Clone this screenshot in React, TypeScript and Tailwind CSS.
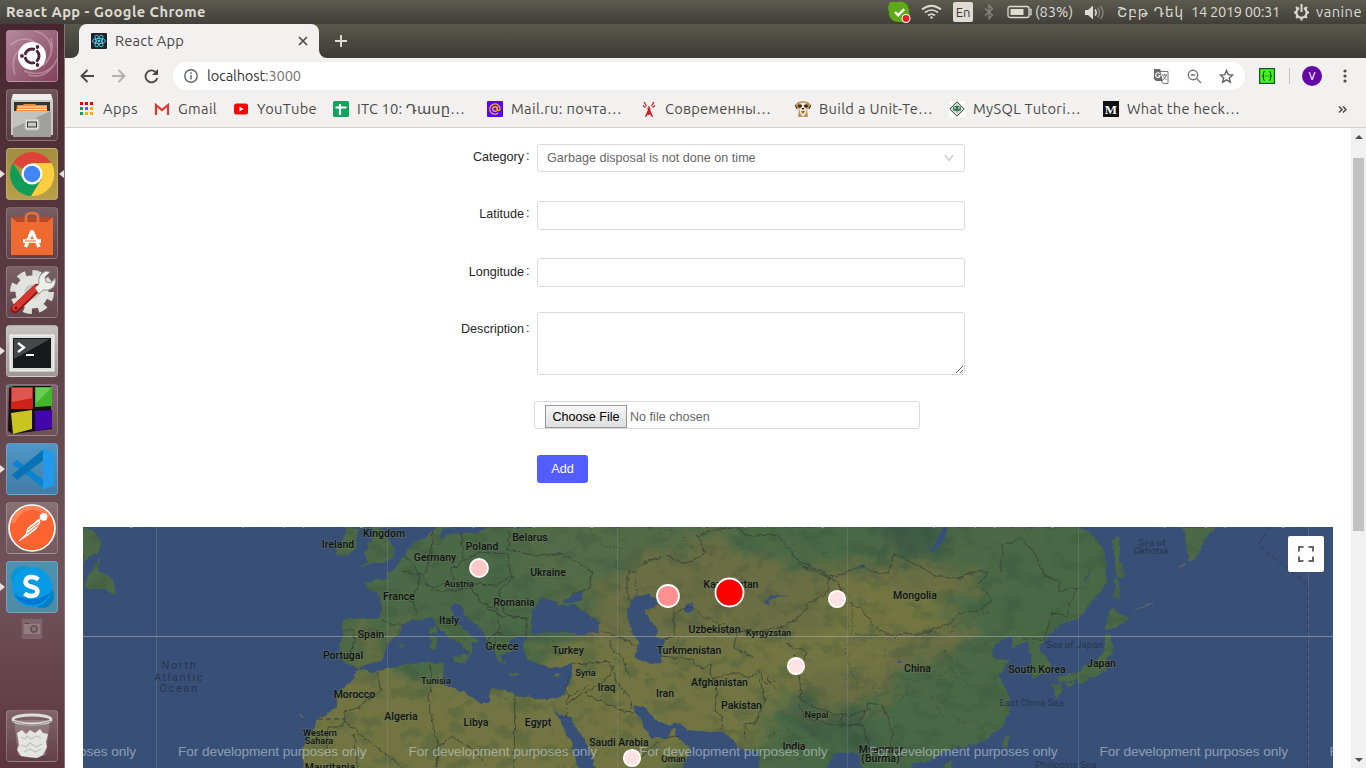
import React, { useLayoutEffect, useRef, useState } from "react";

const UI = "font-['Ubuntu','Noto_Sans','DejaVu_Sans',sans-serif]";

/* Text that is tracked so that it fills a given width. */
function Fit({ w, className = "", children }: { w: number; className?: string; children: string }) {
  const ref = useRef<HTMLSpanElement>(null);
  const [ls, setLs] = useState(0);
  useLayoutEffect(() => {
    const el = ref.current;
    if (el) setLs((w - el.getBoundingClientRect().width) / children.length);
  }, [w, children]);
  return (
    <span ref={ref} className={"inline-block shrink-0 whitespace-pre " + className} style={{ letterSpacing: ls }}>
      {children}
    </span>
  );
}

function TopBar() {
  return (
    <header className={"flex h-6 w-full shrink-0 items-center bg-linear-to-b from-[#5c5b50] to-[#403f3a] text-[14.667px] leading-6 text-[#dfdbd2] " + UI}>
      <Fit w={200} className="ml-1.5 font-bold">React App - Google Chrome</Fit>
      <div className="ml-auto flex h-6 items-center">
        <svg width="24" height="24" viewBox="0 0 24 24" className="mr-[9px]">
          <path d="M3 2h7c6-2 12 4 11 10 2 6-3 11-9 10C5 23 0 17 1 12-.5 8 0 4 3 2z" fill="#5fa818" />
          <path d="M7 12l3.200 3.200 6-6" stroke="#fff" strokeWidth="2.400" fill="none" />
          <circle cx="18" cy="18.500" r="4.500" fill="#fff" />
          <circle cx="18" cy="18.500" r="3.400" fill="#ed1c24" />
        </svg>
        <svg width="21" height="16" viewBox="0 0 21 16" fill="none" stroke="#dfdbd2" strokeWidth="1.700">
          <path d="M1 5.500Q10.500-2 20 5.500M4 8.500q6.500-5 13 0M7 11.500q3.500-2.700 7 0" />
          <circle cx="10.500" cy="13.500" r="1.200" fill="#dfdbd2" stroke="none" />
        </svg>
        <span className="ml-[11px] flex h-5 w-5 items-center justify-center rounded-[2px] bg-[#dfdbd2] text-[13px] text-[#3c3b37]">En</span>
        <svg width="10" height="16" viewBox="0 0 10 16" className="ml-[11px]" fill="none" stroke="#8a887f" strokeWidth="1.200">
          <path d="M1 4.500l7.500 6.500L5 15V1l3.500 4L1 11.500" />
        </svg>
        <svg width="25" height="14" viewBox="0 0 25 14" className="ml-[13px]" fill="none" stroke="#dfdbd2" strokeWidth="1.300">
          <rect x="1" y="1.500" width="21" height="11" rx="2" />
          <rect x="3.500" y="4" width="13" height="6" fill="#dfdbd2" stroke="none" />
          <path d="M22.500 4.500h1.500v5h-1.500" />
        </svg>
        <Fit w={38} className="ml-[3px]">(83%)</Fit>
        <svg width="20" height="15" viewBox="0 0 20 15" className="ml-3" fill="none">
          <path d="M0 5h3l5-4.500v14L3 10H0z" fill="#dfdbd2" />
          <path d="M10 4.500q2.300 3 0 6" stroke="#dfdbd2" strokeWidth="1.600" />
          <path d="M12.500 2.500q4 5 0 10M15.500 1q5 6.500 0 13" stroke="#85837a" strokeWidth="1.500" />
        </svg>
        <Fit w={67} className="ml-3 font-['DejaVu_Sans',sans-serif] text-[13.500px]">Շբթ Դեկ</Fit>
        <Fit w={89} className="ml-[7px]">14 2019 00:31</Fit>
        <svg width="17" height="17" viewBox="0 0 17 17" className="ml-[13px]" fill="none" stroke="#dfdbd2">
          <path d="M6 4a5.200 5.200 0 1 0 5 0" strokeWidth="2.200" />
          <path d="M8.500 0v8M1 8.500h2.500M13.500 8.500H16M3 3l2 2M14 3l-2 2M3 14l2-2M14 14l-2-2M8.500 13v3.500" strokeWidth="2" />
        </svg>
        <Fit w={46} className="mr-1 ml-1.5">vanine</Fit>
      </div>
    </header>
  );
}

function Launcher() {
  const tile = "relative flex size-[52px] shrink-0 items-center justify-center rounded-[4px] border border-white/20 ";
  const dark = "bg-linear-to-b from-white/20 to-white/5";
  const arrow = <span className="absolute top-[21px] -left-[7px] border-y-[4px] border-l-[5px] border-y-transparent border-l-[#e6e1dc]" />;
  return (
    <aside className="flex w-[65px] shrink-0 flex-col items-center gap-[7px] border-r border-[#85757b] bg-linear-to-b from-[#472630] via-[#71545b] via-75% to-[#5b3440] pt-1.5 pr-px pb-1.5">
      <div className={tile + "bg-linear-to-br from-[#b18a9b] to-[#84405c]"}>
        <svg width="50" height="50" viewBox="0 0 50 50" fill="none">
          <path d="M3 14Q16 4 28 11M44 7q4 17-8 28M47 34q-12 13-30 6M8 44Q2 24 16 17M28 0q18 5 16 24M50 28q-9 21-29 16" stroke="#d2b2bf" strokeWidth="1.500" opacity=".55" />
          <circle cx="25" cy="25" r="14" fill="#fff" />
          <circle cx="25" cy="25" r="7" stroke="#512338" strokeWidth="3" />
          <path d="M25 25l-10 0M25 25l6-10M25 25l6 10" stroke="#fff" strokeWidth="1.500" />
          <circle cx="25" cy="25" r="5.300" fill="#fff" />
          <circle cx="15" cy="25" r="2.400" fill="#512338" stroke="#fff" />
          <circle cx="30.500" cy="16" r="2.400" fill="#512338" stroke="#fff" />
          <circle cx="30.500" cy="34" r="2.400" fill="#512338" stroke="#fff" />
        </svg>
      </div>
      <div className={tile + dark}>
        <svg width="46" height="46" viewBox="0 0 46 46">
          <path d="M4 2h38l2 6v35H2V8z" fill="#c9c9c7" />
          <path d="M4 2h38l1 6H3z" fill="#ededeb" />
          <path d="M5 10h36v10H5z" fill="#353330" />
          <path d="M8 13h6l1-1h11l1 1h11v7H7z" fill="#f08b33" />
          <path d="M9 15h29M8 17.500h30" stroke="#fff0df" strokeWidth="1.200" />
          <path d="M4 19h38v26H4z" fill="#9f9f9d" />
          <path d="M4 19h38L4 36z" fill="#c2c2c0" />
          <rect x="16" y="27" width="14" height="11" rx="2" fill="#dededc" stroke="#bbb" />
          <rect x="18.500" y="30" width="9" height="5" fill="#c9c9c7" stroke="#333" />
        </svg>
      </div>
      <div className={tile + "bg-linear-to-b from-[#a28d40] to-[#b8a04a]"}>
        {arrow}
        <svg width="46" height="46" viewBox="0 0 46 46">
          <path d="M23 23L4 12A22 22 0 0 1 42 12z" fill="#db4437" />
          <path d="M23 12H42.500A22 22 0 0 1 22 45L33 28z" fill="#ffcd40" />
          <path d="M4 12A22 22 0 0 0 22 45L32 28 14 28z" fill="#0f9d58" />
          <circle cx="23" cy="23" r="10.500" fill="#fff" />
          <circle cx="23" cy="23" r="8.300" fill="#4285f4" />
        </svg>
        <span className="absolute top-[21px] -right-[7px] border-y-[4px] border-r-[5px] border-y-transparent border-r-[#e6e1dc]" />
      </div>
      <div className={tile + dark}>
        <svg width="46" height="46" viewBox="0 0 46 46" fill="none">
          <path d="M3 7h39l1 6H2z" fill="#b84a23" />
          <path d="M2 7l6 5h30l6-5v38H2z" fill="#ee6a31" />
          <path d="M17 14V7q0-4 6-4t6 4v7" stroke="#e86f42" strokeWidth="2.600" />
          <path d="M16.500 37l6-15h1l6.500 15" stroke="#fff" strokeWidth="3.400" />
          <path d="M14 31h18" stroke="#fff" strokeWidth="3.600" />
          <path d="M16 31h11" stroke="#ee6a31" strokeWidth="1" />
        </svg>
      </div>
      <div className={tile + dark}>
        <svg width="48" height="48" viewBox="0 0 48 48" fill="none">
          <circle cx="24" cy="24" r="18.500" stroke="#deded9" strokeWidth="7" strokeDasharray="8 6.500" />
          <circle cx="24" cy="24" r="12" fill="#bfbfba" stroke="#e3e3df" strokeWidth="9" />
          <circle cx="24" cy="24" r="7" fill="#c9c9c5" />
          <path d="M7 41L29 20" stroke="#8e1410" strokeWidth="8.500" strokeLinecap="round" />
          <path d="M7 40L28 20" stroke="#d8362e" strokeWidth="6" strokeLinecap="round" />
          <path d="M27 20l4-4q-2-9 7-13l4 1-5 5 1 5 5 1 4-5q2 10-7 12l-5 0-4 4z" fill="#eeeeeb" stroke="#92928d" />
          <circle cx="8" cy="40" r="1.300" fill="#541616" />
        </svg>
      </div>
      <div className={tile + "bg-linear-to-b from-[#c5c3c2] to-[#9d9897]"}>
        {arrow}
        <svg width="46" height="46" viewBox="0 0 46 46" fill="none">
          <rect x="1" y="7" width="44" height="36" fill="#dededc" stroke="#f7f7f5" />
          <rect x="4" y="10" width="38" height="30" fill="#171a1b" />
          <path d="M5 11h36L5 31z" fill="#454949" />
          <path d="M9 15l6 4.500L9 24M17 27h8" stroke="#fff" strokeWidth="2.200" />
        </svg>
      </div>
      <div className={tile + dark}>
        <svg width="48" height="50" viewBox="0 0 48 50" className="-ml-1">
          <path d="M3 3l4-2h38v24l1 1v18L7 49 2 46z" fill="#171011" />
          <path d="M5 2h22v22H5z" fill="#ce231b" />
          <path d="M6 3h20v10L6 17z" fill="#df5750" />
          <path d="M29 2h17v19l-17 1z" fill="#42b62d" />
          <path d="M30 3h15L30 18z" fill="#69ce54" />
          <path d="M5 28l21-3v19L7 49z" fill="#c9c421" />
          <path d="M29 26l17-1v18l-17 3z" fill="#4106ad" />
        </svg>
      </div>
      <div className={tile + "bg-linear-to-b from-[#4f97c6] to-[#437ca5]"}>
        {arrow}
        <svg width="46" height="46" viewBox="0 0 46 46">
          <path d="M3 18l5-4 29 22v8z" fill="#0b83cf" />
          <path d="M3 29L36 2v11L8 34z" fill="#0872b7" />
          <path d="M34 2l11 5v32l-11 5V2z" fill="#2299ea" />
        </svg>
      </div>
      <div className={tile + dark}>
        <svg width="50" height="50" viewBox="0 0 50 50" fill="none">
          <circle cx="25" cy="25" r="23" fill="#ff6331" stroke="#fff" strokeWidth="1.700" />
          <path d="M6 20a20 20 0 0 1 36-6" stroke="#ff8556" strokeWidth="4" />
          <circle cx="36.500" cy="14" r="3.800" fill="#fff" />
          <path d="M32 16L21 25l-2 6-7 7 9-6 8-6 4-7z" fill="#fff" stroke="#fff" />
          <path d="M32 19l-11 8M31 22L20 31" stroke="#ff6331" />
        </svg>
      </div>
      <div className={tile + "bg-linear-to-b from-[#4e91af] to-[#508aa5]"}>
        {arrow}
        <svg width="46" height="46" viewBox="0 0 46 46">
          <circle cx="14" cy="14" r="12" fill="#0697da" />
          <circle cx="33" cy="32" r="12" fill="#0580c4" />
          <circle cx="23" cy="23" r="20" fill="#079ce5" />
          <path d="M5 30a20 20 0 0 0 37-3C33 37 17 37 5 30z" fill="#0378d4" />
          <path d="M29.500 15.500q-3-2.500-7-2.500c-6.500 0-8 7-2.500 9l5 1.500c5.500 2 4 8.500-2.500 8.500q-4 0-7-2.500" fill="none" stroke="#fff" strokeWidth="4.500" />
        </svg>
      </div>
      <svg width="20" height="20" viewBox="0 0 20 20" className="-mt-px shrink-0" opacity=".6">
        <path d="M0 0h20v20H0z" fill="#8f7480" />
        <rect x="2" y="5" width="16" height="10" rx="1" fill="#a99da0" />
        <circle cx="12" cy="10" r="4" fill="#69575d" />
        <circle cx="12" cy="10" r="2" fill="#a0949a" />
        <path d="M3 4h4v1H3z" fill="#4f3b42" />
      </svg>
      <div className={tile + "mt-auto bg-linear-to-b from-white/20 to-white/5"}>
        <svg width="46" height="48" viewBox="0 0 46 48" fill="none">
          <path d="M5 8l4 35q13 6 28 0l4-35" fill="#c6bec0" fillOpacity=".3" />
          <path d="M8 21l5-3 4 4 4-4 5 3 5-4 3 4 5 1-2 8 1 5-4 8-6 3-9-1-7-1-4-6 2-5z" fill="#e4e5e1" />
          <path d="M12 25l4 2 2-3 4 3 5-3 5 2M12 33l5 2 4-4 6 4 6-3M15 40l6-3 5 3 6-3" stroke="#c2c3be" strokeWidth="1.200" />
          <ellipse cx="23" cy="7.500" rx="19" ry="4.500" stroke="#dedfdb" strokeWidth="3" />
          <path d="M4 9q19 8 38 0" stroke="#8b8987" />
        </svg>
      </div>
    </aside>
  );
}

function TabStrip() {
  return (
    <div className="flex h-[34px] shrink-0 items-end bg-linear-to-b from-[#58584b] to-[#3c3b37]">
      <div className="h-[34px] w-3.5 bg-[#f2f1f0]"><div className="size-full rounded-br-lg bg-linear-to-b from-[#58584b] to-[#3c3b37]" /></div>
      <div className={"flex h-[34px] w-60 items-center rounded-t-lg bg-[#f2f1f0] pr-[11px] pl-3 text-[14.667px] text-[#454542] " + UI}>
        <svg width="16" height="16" viewBox="0 0 16 16" fill="none" stroke="#61dafb" strokeWidth=".8">
          <rect width="16" height="16" rx="1" fill="#20232a" stroke="none" />
          <ellipse cx="8" cy="8" rx="6.500" ry="2.600" />
          <ellipse cx="8" cy="8" rx="6.500" ry="2.600" transform="rotate(60 8 8)" />
          <ellipse cx="8" cy="8" rx="6.500" ry="2.600" transform="rotate(120 8 8)" />
          <circle cx="8" cy="8" r="1" fill="#61dafb" />
        </svg>
        <Fit w={69} className="ml-2">React App</Fit>
        <svg width="10" height="10" viewBox="0 0 10 10" className="ml-auto" stroke="#484845" strokeWidth="1.600"><path d="M1 1l8 8M9 1L1 9" /></svg>
      </div>
      <div className="h-[34px] w-3 bg-[#f2f1f0]"><div className="size-full rounded-bl-lg bg-linear-to-b from-[#58584b] to-[#3c3b37]" /></div>
      <svg width="12" height="12" viewBox="0 0 12 12" className="mb-[11px] ml-1" stroke="#deded8" strokeWidth="1.900"><path d="M6 0v12M0 6h12" /></svg>
    </div>
  );
}

function Toolbar() {
  return (
    <div className="flex h-9 shrink-0 items-center bg-[#f2f1f0]">
      <svg width="14" height="14" viewBox="0 0 14 14" className="ml-[15px]" fill="none" stroke="#4a4a4a" strokeWidth="1.900"><path d="M14 7H1.500M7.500 1L1.500 7l6 6" /></svg>
      <svg width="14" height="14" viewBox="0 0 14 14" className="ml-[18px]" fill="none" stroke="#b1b0ae" strokeWidth="1.900"><path d="M0 7h12.500M6.500 1l6 6-6 6" /></svg>
      <svg width="15" height="15" viewBox="0 0 15 15" className="ml-[18px]" fill="none" stroke="#4a4a4a" strokeWidth="1.900"><path d="M12.500 4A6 6 0 1 0 13.300 9" /><path d="M14 0v6H8z" fill="#4a4a4a" stroke="none" /></svg>
      <div className={"ml-3.5 flex h-7 w-[1072px] items-center rounded-full bg-white pr-[11px] pl-[11px] text-[14.667px] text-[#737373] " + UI}>
        <svg width="14" height="14" viewBox="0 0 14 14" fill="none" stroke="#5f6368" strokeWidth="1.400"><circle cx="7" cy="7" r="6.200" /><path d="M7 6v4.500M7 3.300v1.600" /></svg>
        <Fit w={58} className="ml-[9px] text-[#363636]">localhost</Fit>
        <Fit w={36}>:3000</Fit>
        <svg width="15" height="15" viewBox="0 0 15 15" className="ml-auto" fill="none">
          <path d="M0 0h6l1.500 3h-1l2.500 9H2L0 10z" fill="#696969" />
          <path d="M6.500 2.500h7.500v12H9l-2-3" stroke="#777" />
          <path d="M5.800 4.700a2.300 2.300 0 1 0 .4 2H4.200" stroke="#fff" strokeWidth="1.100" />
          <path d="M8 6h5M10.500 5v1M12.500 6q-1 3-3.500 5M9.500 7q1 2.500 3 4" stroke="#777" />
        </svg>
        <svg width="15" height="15" viewBox="0 0 15 15" className="ml-[18px]" fill="none" stroke="#777" strokeWidth="1.400"><circle cx="6" cy="6" r="4.700" /><path d="M9.500 9.500l4.500 4.500M3.800 6h4.400" /></svg>
        <svg width="15" height="15" viewBox="0 0 15 15" className="ml-[17px]" fill="none" stroke="#636363" strokeWidth="1.400"><path d="M7.500 1.500l1.700 4.100 4.400.4-3.300 2.900 1 4.300-3.800-2.300-3.800 2.300 1-4.300L1.400 6l4.400-.4z" /></svg>
      </div>
      <svg width="16" height="16" viewBox="0 0 16 16" className="ml-3.5" fill="none" stroke="#174d30" strokeWidth="1.200"><rect x=".6" y=".6" width="14.800" height="14.800" fill="#45f71b" /><path d="M6 3.500q-2 0-1.500 2.500T3 8q2 0 1.500 2T6 12.500M10 3.500q2 0 1.500 2.500T13 8q-2 0-1.500 2T10 12.500M6.500 8h1M8.500 8h1" /></svg>
      <div className="ml-3.5 h-4 w-px bg-[#c4c4c3]" />
      <div className="ml-3 flex size-5 items-center justify-center rounded-full bg-[#6507a7] font-['Noto_Sans',sans-serif] text-[11px] text-white">V</div>
      <svg width="4" height="14" viewBox="0 0 4 14" className="ml-[21px]" fill="#4a4a4a"><circle cx="2" cy="2" r="1.600" /><circle cx="2" cy="7" r="1.600" /><circle cx="2" cy="12" r="1.600" /></svg>
    </div>
  );
}

const bookmarks: { label: string; w: number; box: string; icon: React.ReactNode }[] = [
  { label: "Apps", w: 35, box: "w-[75px]", icon: <><path d="M1 1h3v3H1zM6 1h3v3H6z" fill="#f00000" /><path d="M11 1h3v3h-3z" fill="#f00000" /><path d="M1 6h3v3H1z" fill="#0aa05c" /><path d="M6 6h3v3H6z" fill="#4b5cff" /><path d="M11 6h3v3h-3z" fill="#f6b400" /><path d="M1 11h3v3H1z" fill="#0aa05c" /><path d="M6 11h3v3H6zM11 11h3v3h-3z" fill="#f6b400" /></> },
  { label: "Gmail", w: 39, box: "w-[79px]", icon: <><path d="M1 3h14v11H1z" fill="#f4f4f4" /><path d="M2 14V4l6 5 6-5v10" fill="none" stroke="#d93a2c" strokeWidth="2.200" /></> },
  { label: "YouTube", w: 60, box: "w-[100px]", icon: <><rect x="1" y="2.500" width="14" height="11" rx="2.500" fill="#f00" /><path d="M6.500 5.500v5L10.500 8z" fill="#fff" /></> },
  { label: "ITC 10: Դասը…", w: 108, box: "w-[154px]", icon: <><rect width="16" height="16" rx="1.500" fill="#0aa65b" /><path d="M7 3v11M2.500 6.500h11" stroke="#fff" strokeWidth="2.200" /></> },
  { label: "Mail.ru: почта…", w: 111, box: "w-[154px]", icon: <><rect width="16" height="16" rx="1" fill="#5405fa" /><circle cx="8" cy="8" r="2.300" stroke="#f6ac18" strokeWidth="1.400" fill="none" /><path d="M10.400 5.500v3.500q2 1.500 2.700-1A5.200 5.200 0 1 0 11.300 12" stroke="#f6ac18" strokeWidth="1.300" fill="none" /></> },
  { label: "Современны…", w: 106, box: "w-[154px]", icon: <path d="M8 5v3L4.500 16M8 8l3.500 8M6 12l4 2M10 12l-4 2M6.500 8h3M5.500 5L3 1M10.500 5L13 1M4.500 6.500L2 4.500M11.500 6.500l2.500-2M8 5.500v7" stroke="#cf1820" strokeWidth="1.300" fill="none" /> },
  { label: "Build a Unit-Te…", w: 114, box: "w-[154px]", icon: <><path d="M0 4l3-3 5-1 5 1 3 3-1 3-3 1 1 8H3l1-8-3-1z" fill="#b9935a" /><path d="M4 3q4-3 8 0l-1 9-3 4-3-4z" fill="#f2e6ca" /><ellipse cx="5" cy="5" rx="2" ry="1.700" fill="#3b291e" /><ellipse cx="11" cy="5" rx="2" ry="1.700" fill="#3b291e" /><path d="M6.500 7h3L8 9z" fill="#171313" /><path d="M6 10h4l-2 3z" fill="#a44d45" /><path d="M0 4l2 4M16 4l-2 4" stroke="#3b291e" /></> },
  { label: "MySQL Tutori…", w: 108, box: "w-[154px]", icon: <><path d="M0 0h16v16H0z" fill="#fff" /><path d="M8 .8L15.200 8 8 15.200.8 8z" fill="#dde6df" stroke="#333" /><path d="M4 6l4-1.500L12 6v3q-4 5-8 0z" fill="#39785b" /><path d="M5 7h2M9 7h2M5 10q3 2 6 0" stroke="#e7f5e9" /></> },
  { label: "What the heck…", w: 113, box: "w-[154px]", icon: <><rect width="16" height="16" fill="#111" /><text x="8" y="12.500" textAnchor="middle" fill="#fff" fontFamily="Liberation Serif" fontWeight="700" fontSize="13">M</text></> },
];

function Bookmarks() {
  return (
    <div className={"flex h-[34px] shrink-0 items-center border-b border-[#cfcecc] bg-[#f2f1f0] pb-[3px] pl-3.5 text-[14.667px] text-[#4a4a48] " + UI}>
      {bookmarks.map((b) => (
        <div key={b.label} className={"flex shrink-0 items-center gap-2 " + b.box}>
          <svg width="16" height="16" viewBox="0 0 16 16" className="shrink-0">{b.icon}</svg>
          <Fit w={b.w}>{b.label}</Fit>
        </div>
      ))}
      <svg width="9" height="7" viewBox="0 0 9 7" className="mr-[19px] ml-auto" fill="none" stroke="#4a4a48" strokeWidth="1.500"><path d="M1 .5l3 3-3 3M5 .5l3 3-3 3" /></svg>
    </div>
  );
}

const box = "w-[428px] rounded-[3px] border border-[#d9d9d9] bg-white";

function Label({ children }: { children: string }) {
  return (
    <div className="mr-[7px] flex w-[101px] items-start justify-end text-[12.600px] leading-[26px] text-[#262626]">
      <span>{children}</span>
      <span className="-mt-px ml-0.5 w-[4px]">:</span>
    </div>
  );
}

function Form() {
  return (
    <form className="flex flex-col pt-4 pl-[364px] font-['Liberation_Sans',Arial,sans-serif] text-[13px] text-[#666]">
      <div className="flex h-[57px] items-start">
        <Label>Category</Label>
        <div className={box + " flex h-7 items-center justify-between pr-2.5 pl-[9px] text-[12.600px]"}>
          <span>Garbage disposal is not done on time</span>
          <svg width="10" height="8" viewBox="0 0 10 8" fill="none" stroke="#bfbfbf" strokeWidth="1.200"><path d="M1 1l4 5.500L9 1" /></svg>
        </div>
      </div>
      <div className="flex h-[57px] items-start">
        <Label>Latitude</Label>
        <div className={box + " h-[29px]"} />
      </div>
      <div className="flex h-[54px] items-start">
        <div className="pt-px"><Label>Longitude</Label></div>
        <div className={box + " h-[29px]"} />
      </div>
      <div className="flex h-[89px] items-start">
        <div className="pt-[4px]"><Label>Description</Label></div>
        <div className={box + " flex h-[63px] items-end justify-end"}>
          <svg width="9" height="9" viewBox="0 0 9 9" stroke="#555" strokeWidth=".9"><path d="M1 8l7-7M5 8l3-3" /></svg>
        </div>
      </div>
      <div className="ml-[105px] flex h-7 w-[386px] items-start rounded-[3px] border border-[#d9d9d9] pt-[3px] pl-2.5 text-[12.600px]">
        <span className="flex h-[23px] w-[82px] items-center justify-center border border-[#999] bg-linear-to-b from-[#f6f6f6] to-[#dedede] pt-px text-black">Choose File</span>
        <span className="ml-[3px] leading-[25px]">No file chosen</span>
      </div>
      <div className="mt-[26px] ml-[108px] flex h-7 w-[51px] items-center justify-center rounded-[3px] bg-[#525cff] text-[12.600px] text-white">Add</div>
    </form>
  );
}

const land = [
  "M83 527L93 530 101 541 100 550 83 562z",
  "M100 557L97 568 108 575 113 583 116 588 115 595 110 592 103 588 84 588 90 572z",
  "M347 527L358 528 356 547 347 556 335 555 339 546 343 538z",
  "M373 527L383 529 387 540 395 548 393 558 382 564 373 563 360 568 368 562 363 553 370 550 366 543 372 540z",
  "M437 527L425 538 412 543 403 558 393 570 387 573 386 579 377 579 372 583 364 582 366 587 377 592 382 600 380 618 370 620 350 618 342 620 342 635 339 653 343 663 353 665 359 668 368 664 378 663 385 653 387 642 402 632 403 624 412 620 422 621 432 617 437 625 450 638 462 644 469 652 468 658 472 652 472 643 480 642 467 632 457 622 449 608 455 603 462 605 465 615 480 628 486 637 488 646 495 653 500 663 508 662 505 652 515 650 507 642 518 637 528 637 523 645 526 656 533 663 547 667 560 667 572 663 572 677 565 695 547 700 530 698 515 695 500 688 490 690 489 702 480 703 465 692 445 687 442 677 443 663 430 662 410 663 390 668 373 673 358 669 353 680 337 693 337 707 318 720 307 740 302 750 303 770 578 770 573 747 553 707 563 717 570 718 587 743 597 770 682 770 690 748 677 737 675 728 667 738 650 738 638 717 633 705 645 707 655 720 670 725 680 722 687 730 727 733 737 747 750 750 758 753 760 770 823 770 837 753 847 752 857 753 863 770 909 770 913 763 930 761 947 750 983 742 1000 728 1010 710 1010 697 998 675 1010 660 997 660 990 650 1002 638 1012 637 1012 648 1027 640 1030 650 1033 678 1048 672 1050 663 1040 647 1050 635 1060 623 1077 620 1097 597 1106 583 1106 560 1098 540 1080 527z",
  "M1113 540L1118 537 1120 560 1125 577 1117 577 1121 598 1114 598 1116 575z",
  "M1112 606L1119 614 1130 617 1118 627 1105 630 1107 620z",
  "M1105 634L1110 635 1114 647 1108 660 1107 670 1092 677 1080 684 1078 679 1060 683 1055 678 1078 672 1088 665 1098 660 1105 648z",
  "M1051 684L1061 683 1062 691 1057 699 1054 690z",
  "M1065 683L1076 681 1070 688z",
  "M1183 527L1217 527 1205 539 1200 552 1190 562z",
  "M1010 733L1007 748 1002 747 1004 737z",
  "M430 627l6-2 0 8-6 1zM430 635l7 1-2 13-5-1zM452 656l16-1-3 10-10-4zM498 654l8 2 2 6-4 3zM508 673l13 1 0 2-12-1zM553 676l9-3-5 4z",
  "M945 764l8-2-2 8h-8zM398 644l7 1-3 3z",
].join(" ");

const water = [
  "M530 628L533 610 543 598 555 601 560 606 575 605 587 613 600 623 599 632 582 635 558 632 540 634 533 635z",
  "M563 602L570 596 583 591 581 600 570 604z",
  "M630 603L636 596 645 594 658 598 656 607 645 610 645 612 652 622 658 628 657 637 666 640 663 646 662 663 650 664 637 658 636 648 639 642 630 627 627 612z",
  "M440 538L452 534 462 535 483 530 490 527 455 527 442 529z",
  "M685 603l9-1-2 11-7-1zM763 602l8-7 20 1-11 1-11 4-1 5zM918 556l12-4 14-25h5l-5 14-10 10zM860 564l4 2-2 4zM1086 577l4-8-4 15zM635 638l2 3zM897 660l5 2-3 2zM645 598l8-2z",
].join(" ");

const borders =
  "M382 620l8 5 14 0M342 630l12 0-1 15-3 13M378 673l4 18-11 6-12 10-15 5v14h-17v28M343 720l60 48M354 734l4 34M404 555l16 18-1 12-9 14 8 14M400 571l24 3 6-14 3-29M461 532l2 28-12 8 3 12-18 7-12-3M463 560l17-8 28 2 3 22-14 9-43-2M510 530l-2 20 30 6 25-3 29 19-3 17-17 5M513 576l-15 18 8 20 22 6-2 17M487 607l14 9 28 2M430 590l24 1 18-4 8 16 16 6 3 16-5 18M487 640l10-7 22 4M430 663l2 22-4 14 10 50-1 19M515 695l-1 75M437 745l16-8 17 10 13 14M545 770l20-1M568 676l-1 28 12-8 14-8 11-5 10-17M572 663l13 1 25-3 6 20 15 20 1 8M567 708l-2 11M590 685l-23 12M586 695l38 16 11 1M600 631l22 7 13 8M610 640l5 13 8 5 5 13 3 10M627 575l18-13 22-7 14 8 16-3 7-8-6-15 19-8 17-1 12-1M627 575l0 18 5 9M658 604l16-2v34l-12 4M674 613l15-7 16 12 19 7 7 10 23-7M662 656l30 3 10 10 8-5 1 12 6 6-2 30 7 4-1 16M710 680l22-7 18 5 9-8 6 13 10-2M760 678l5 24-10 21-11 1 1 14M775 690l-8-15M731 525l20 11 26-1 22 27 35 15M798 561l0 4 32 12-6 19-14 6-12 17-22 10-40 4-2 14 19 10M835 577l25-11 12 6 17 1 5-19 28 14 15 8 18 3 22-8 12 2-12 12 10 8 5 8-16 11-17 1-11 12-33 10-28-1-14-9-12-17-21-8 1-14-16-12M1000 572l3-29 20-4 11 13 12 25 12 5v10l18-4-9 28-15-4-8 29-21-3M793 655l7 25 1 20 19 10 20 5 17 0 13-7M787 645l20 8-7 17M798 705l9 12 34 10 2-13M842 724l20 1 9 26M857 725l13-23 12 2 10 26-2 22 18 5M666 738l14-3M657 743l-22 20";

const provinces = "M590 528l12 18 19 2-6 20 21 4 1 25M650 540l14-11 18 5 12 16M835 580l17 20 1 27-8 28 12 30 26 11 17-12M855 635l35-1 18 11 16-15 22 6 12-11 31-13M884 650l6 25 26 6 30-8 20-20 16-14 13 15M898 704l12-17 23 13 13 21-10 24M945 650l9 25 19 13 24-10M954 680l-12 25 20 18 19-3M847 718l8-16 21-17M770 735l15-8 12 13 20-7M770 752l22 11 20-10";

type MapLabel = [string, number, number, number?];
const countries: MapLabel[] = [
  ["Ireland", 338, 548], ["United", 385, 527], ["Kingdom", 384, 537], ["Germany", 435, 561], ["Poland", 482, 550], ["Belarus", 530, 541], ["Ukraine", 548, 576], ["Austria", 459, 587, 9.200], ["France", 399, 600], ["Romania", 514, 606], ["Italy", 449, 624], ["Spain", 371, 638], ["Portugal", 343, 659], ["Greece", 502, 650], ["Turkey", 568, 654], ["Syria", 585.500, 676, 9.200], ["Iraq", 606.500, 691], ["Iran", 665, 697], ["Tunisia", 436, 684, 9.200], ["Morocco", 354.500, 698], ["Algeria", 401, 720], ["Libya", 476, 726], ["Egypt", 538, 726], ["Western", 320, 736, 9.200], ["Sahara", 319, 744, 9.200], ["Mauritania", 330, 771], ["Saudi Arabia", 619, 746], ["Oman", 673.500, 762, 9.200], ["Kazakhstan", 731, 588], ["Uzbekistan", 714.500, 633], ["Kyrgyzstan", 768.500, 636, 9.200], ["Turkmenistan", 689, 654], ["Afghanistan", 719.500, 686], ["Pakistan", 741.500, 709], ["Nepal", 816.500, 718, 9.200], ["India", 794, 750], ["Mongolia", 915, 599], ["China", 917.500, 672], ["South Korea", 1037, 673], ["Japan", 1101.500, 667], ["Myanmar", 881, 753], ["(Burma)", 880.500, 762],
];
const seas: MapLabel[] = [["Sea of", 1152, 546], ["Okhotsk", 1151.500, 554], ["Sea of Japan", 1074.500, 648], ["East China Sea", 1031.500, 706], ["Philippine Sea", 1066, 768]];
const markers: [number, number, number, string][] = [
  [479, 568, 9, "#ffc8c8"], [668, 596, 11, "#ff9090"], [729.500, 592.500, 14, "#ff0000"], [837, 599, 8.200, "#ffe3e4"], [796, 666, 8.200, "#ffe3e4"], [632, 758, 8.200, "#ffe3e4"],
];

function WorldMap() {
  return (
    <div className="relative mt-11 ml-[18px] h-[241px] w-[1250px] shrink-0 overflow-hidden">
      <svg width="1250" height="241" viewBox="83 527 1250 241" className="block font-['Roboto',sans-serif]">
        <defs>
          <filter id="coast" filterUnits="userSpaceOnUse" x="73" y="517" width="1270" height="261" colorInterpolationFilters="sRGB">
            <feTurbulence type="fractalNoise" baseFrequency=".13" numOctaves="3" seed="4" result="n" />
            <feDisplacementMap in="SourceGraphic" in2="n" scale="6" xChannelSelector="R" yChannelSelector="G" />
          </filter>
          <filter id="regions" filterUnits="userSpaceOnUse" x="23" y="467" width="1370" height="361" colorInterpolationFilters="sRGB">
            <feGaussianBlur stdDeviation="8" result="b" />
            <feTurbulence type="fractalNoise" baseFrequency=".03 .045" numOctaves="4" seed="9" result="n" />
            <feDisplacementMap in="b" in2="n" scale="45" xChannelSelector="R" yChannelSelector="G" />
          </filter>
          <filter id="relief" filterUnits="userSpaceOnUse" x="83" y="527" width="1250" height="241" colorInterpolationFilters="sRGB">
            <feTurbulence type="fractalNoise" baseFrequency=".045 .07" numOctaves="4" seed="21" />
            <feColorMatrix values="0 0 0 0 .2  0 0 0 0 .31  0 0 0 0 .24  6 0 0 0 -3.100" />
          </filter>
          <clipPath id="landClip"><path d={land} /></clipPath>
        </defs>
        <path d="M83 527h1250v241H83z" fill="#385078" />
        <g filter="url(#coast)">
          <g clipPath="url(#landClip)">
            <path d="M73 517h1270v261H73z" fill="#4b6946" />
            <g filter="url(#regions)">
              <path d="M500 515h230v62l-100 20-90 10z" fill="#536b47" />
              <path d="M600 580l60-30 60-10 80 30 50-10 130 10 20 30-50 45-60 45-40 25-80-10-25 60-100-5-70-50z" fill="#6b6e44" />
              <path d="M530 645l200-15 110 10 70 5-60 30-50-5-20 60-120 40 0 40H250l10-100 110-38 180 26z" fill="#727542" />
              <path d="M820 590l100-5 50 20-30 25-100 5zM710 645l130-20 30 15-80 15z" fill="#737640" />
              <path d="M350 620l55 5-20 35-30 5z" fill="#676f43" />
              <path d="M740 500h130l20 55-60 15zM930 610l60-30 50-60 80 10-20 90-70 20zM770 690l60 35 50-15 30-40 100-10 10 80-180 60-70-70z" fill="#496946" />
              <path d="M790 695l40 23 35-1 15 45-20 5-15-30-50-15zM870 515l80 0-10 45-50 0z" fill="#3f5d45" />
            </g>
            <path d="M73 517h1270v261H73z" filter="url(#relief)" opacity=".24" />
          </g>
          <path d={water} fill="#385078" />
          <path d="M1180 567l4-4M1135 611l18-8M700 560l3 2M860 600l5-3M300 715l5 1" stroke="#687060" strokeWidth="1.300" />
          <path d={borders} fill="none" stroke="#353e35" strokeWidth=".9" opacity=".9" />
          <path d={provinces} fill="none" stroke="#3d493b" strokeWidth=".8" strokeDasharray="2 2" opacity=".85" />
        </g>
        <path d="M1270 527l-12 18 50 40v183M318 719h27" fill="none" stroke="#303b50" strokeDasharray="5 3" />
        <path d="M156.500 527v241M387.500 527v241M617.500 527v241M847.500 527v241M1078.500 527v241M1308.500 527v241" stroke="#94a0a5" strokeOpacity=".25" />
        <path d="M83 636.500h1250" stroke="#a1a7a1" strokeOpacity=".65" />
        <g textAnchor="middle" fill="#27354e" fontSize="9.700">
          {seas.map(([t, x, y]) => <text key={t} x={x} y={y}>{t}</text>)}
          <g fontSize="11" letterSpacing="1.600">
            <text x="179.500" y="669">North</text><text x="179" y="681">Atlantic</text><text x="179" y="692">Ocean</text>
          </g>
        </g>
        <g textAnchor="middle" fill="#101410" fontWeight="500" stroke="#74806b" strokeOpacity=".35" strokeWidth="1.800" paintOrder="stroke">
          {countries.map(([t, x, y, s]) => <text key={t} x={x} y={y} fontSize={s ?? 10.500}>{t}</text>)}
        </g>
        {markers.map(([x, y, r, c]) => <circle key={x} cx={x} cy={y} r={r} fill={c} stroke="#fff" strokeWidth="1.800" />)}
        <g fill="#dfe4ec" fillOpacity=".52" fontFamily="Liberation Sans" fontSize="13.700">
          {[-52.500, 178, 408.500, 639, 869, 1099.500, 1329.500].map((x) => (
            <React.Fragment key={x}>
              <text x={x} y="756" textLength="188.500">For development purposes only</text>
              <text x={x} y="524.500" textLength="188.500">For development purposes only</text>
            </React.Fragment>
          ))}
        </g>
      </svg>
      <div className="absolute top-[9px] right-[9px] flex size-9 items-center justify-center rounded-[2px] bg-white">
        <svg width="16" height="16" viewBox="0 0 16 16" fill="none" stroke="#666" strokeWidth="2"><path d="M1 5.500V1h4.500M10.500 1H15v4.500M15 10.500V15h-4.500M5.500 15H1v-4.500" /></svg>
      </div>
    </div>
  );
}

export default function App() {
  return (
    <div className="flex h-[768px] w-[1366px] flex-col overflow-hidden bg-white">
      <TopBar />
      <div className="flex min-h-0 flex-1">
        <Launcher />
        <main className="flex w-[1301px] flex-col">
          <TabStrip />
          <Toolbar />
          <Bookmarks />
          <div className="flex min-h-0 flex-1">
            <div className="flex w-[1286px] flex-col overflow-hidden">
              <Form />
              <WorldMap />
            </div>
            <div className="flex w-[15px] flex-col items-center bg-[#f1f1f1]">
              <div className="mt-[7px] border-x-[4px] border-b-[4px] border-x-transparent border-b-[#505050]" />
              <div className="mt-[19px] h-[373px] w-[11px] bg-[#c1c1c1]" />
              <div className="mt-auto mb-1.5 border-x-[4px] border-t-[4px] border-x-transparent border-t-[#505050]" />
            </div>
          </div>
        </main>
      </div>
    </div>
  );
}
